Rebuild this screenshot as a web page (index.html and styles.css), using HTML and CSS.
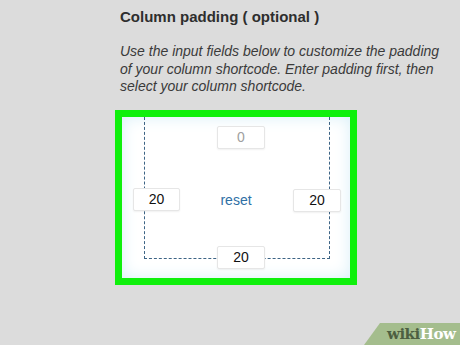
FILE: index.html
```html
<!DOCTYPE html>
<html>
<head>
<meta charset="utf-8">
<link rel="stylesheet" href="styles.css">
</head>
<body>
<div class="page">
  <div class="text">
    <h2 class="title">Column padding ( optional )</h2>
    <p class="desc">Use the input fields below to customize the padding of your column shortcode. Enter padding first, then select your column shortcode.</p>
  </div>
  <div class="frame">
    <div class="inner">
      <div class="dashed"></div>
      <div class="field f-top muted">0</div>
      <div class="field f-left">20</div>
      <a class="reset">reset</a>
      <div class="field f-right">20</div>
      <div class="field f-bottom">20</div>
    </div>
  </div>
</div>
<div class="logo"><span class="wiki">wiki</span><span class="how">How</span></div>
</body>
</html>
```
FILE: styles.css
```css
html, body {
  margin: 0;
  padding: 0;
  background: #dcdcdc;
  width: 460px;
  height: 345px;
  overflow: hidden;
}
.page {
  padding: 9px 0 0 115px;
  font-family: "Liberation Sans", Arial, sans-serif;
}
.text {
  padding-left: 5px;
}
.title {
  margin: 0;
  font-size: 15px;
  line-height: 16px;
  font-weight: bold;
  color: #2e2e2e;
}
.desc {
  margin: 18px 0 0 0;
  width: 326px;
  font-size: 14px;
  line-height: 17.5px;
  font-style: italic;
  color: #3a3a3a;
}
.frame {
  margin-top: 14px;
  width: 228px;
  height: 161px;
  border: 7px solid #0ff00c;
}
.inner {
  position: relative;
  box-sizing: border-box;
  height: 100%;
  padding: 9px 9px 9px 11px;
  background: #fff;
  box-shadow: inset 0 0 16px #d8eff8;
  display: grid;
  grid-template-columns: 48px 112px 48px;
  grid-template-rows: 23px 1fr 23px;
}
.dashed {
  position: absolute;
  left: 22px;
  top: 0;
  width: 184px;
  height: 141px;
  border: 1px dashed #3d6485;
  border-top: none;
}
.field {
  position: relative;
  box-sizing: border-box;
  width: 48px;
  height: 23px;
  background: #fff;
  border: 1px solid #e6e6e6;
  border-radius: 2px;
  box-shadow: 0 1px 2px rgba(0,0,0,0.06);
  font-size: 14px;
  line-height: 21px;
  text-align: center;
  color: #111;
}
.muted {
  color: #a0a0a0;
}
.f-top {
  grid-column: 2;
  grid-row: 1;
  margin-left: 36px;
}
.f-left {
  grid-column: 1;
  grid-row: 2;
  align-self: center;
  margin-top: 4px;
  width: 47px;
}
.f-right {
  grid-column: 3;
  grid-row: 2;
  align-self: center;
  margin-top: 7px;
}
.f-bottom {
  grid-column: 2;
  grid-row: 3;
  margin-left: 36px;
}
.reset {
  grid-column: 2;
  grid-row: 2;
  align-self: center;
  justify-self: center;
  margin-top: 5px;
  margin-right: 2px;
  font-size: 14px;
  color: #2f70a5;
}
.logo {
  position: absolute;
  right: 0;
  bottom: 0;
  width: 96px;
  height: 22px;
  background: #a4bd8d;
  clip-path: polygon(16px 0, 100% 0, 100% 100%, 0 100%);
  box-sizing: border-box;
  padding-left: 23px;
  font-family: "DejaVu Serif", serif;
  font-weight: bold;
  font-size: 15px;
  line-height: 22px;
  letter-spacing: -0.5px;
}
.wiki {
  color: #4d5f41;
}
.how {
  color: #fff;
}
```
